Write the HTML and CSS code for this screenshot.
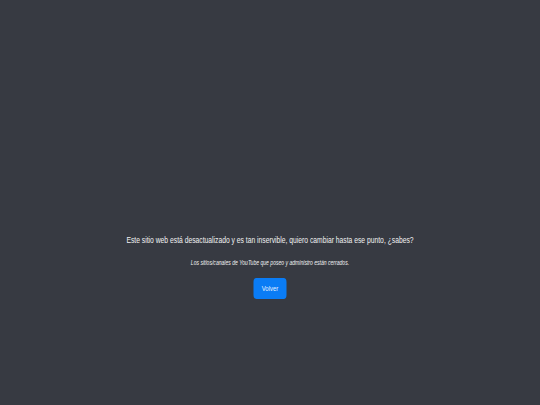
FILE: index.html
```html
<!DOCTYPE html>
<html lang="es">
<head>
<meta charset="utf-8">
<link rel="stylesheet" href="styles.css">
</head>
<body>
<main class="page">
  <div class="stage">
    <h1 class="title">Este sitio web está desactualizado y es tan inservible, quiero cambiar hasta ese punto, ¿sabes?</h1>
    <p class="note">Los sitios/canales de YouTube que poseo y administro están cerrados.</p>
    <button class="btn">Volver</button>
  </div>
</main>
</body>
</html>
```
FILE: styles.css
```css
html, body {
  margin: 0;
  padding: 0;
  height: 100%;
  overflow: hidden;
  background: #373a42;
}
.page {
  height: 405px;
  padding-top: 234px;
  box-sizing: border-box;
  font-family: "Liberation Sans", Arial, sans-serif;
  color: #f2f2f2;
}
/* The reference is a 16:9 page squeezed into 4:3 */
.stage {
  display: flex;
  flex-direction: column;
  align-items: center;
  transform: scaleX(0.75);
  transform-origin: 50% 0;
}
.title {
  margin: 0;
  font-size: 9px;
  font-weight: normal;
  line-height: 12px;
  white-space: nowrap;
}
.note {
  margin: 12px 0 0;
  font-size: 6.75px;
  font-style: italic;
  line-height: 9px;
  white-space: nowrap;
}
.btn {
  margin-top: 11px;
  width: 44px;
  height: 21px;
  border: none;
  border-radius: 4px;
  background: #0a7cf5;
  color: #e8f1ff;
  font-family: inherit;
  font-size: 8px;
  padding: 0;
}
```
